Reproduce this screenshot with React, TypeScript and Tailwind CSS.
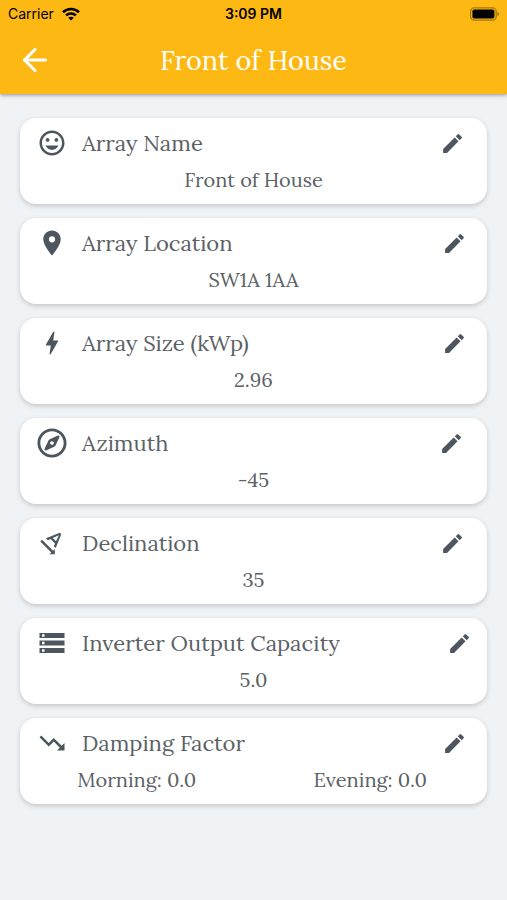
import type { ReactNode } from "react";
import type { IconType } from "react-icons";
import { ArrowLeft } from "lucide-react";
import { FaRegCompass } from "react-icons/fa";
import {
  MdBolt,
  MdEdit,
  MdLocationOn,
  MdStorage,
  MdTagFaces,
  MdTextRotationAngledown,
  MdTrendingDown,
} from "react-icons/md";

type CardProps = {
  icon: IconType;
  title: string;
  children: ReactNode;
};

const StatusBar = () => {
  return (
    <div className="grid h-7 grid-cols-3 items-center px-2 font-['Inter',sans-serif] text-sm text-black">
      <div className="flex items-center gap-2">
        <span>Carrier</span>
        <svg viewBox="0 0 18 14" className="h-[14px] w-[18px]" fill="none" stroke="currentColor" strokeWidth="2.6">
          <path d="M1 5.2C5.4 0.9 12.6 0.9 17 5.2" />
          <path d="M4.1 8.4C6.8 5.8 11.2 5.8 13.9 8.4" />
          <path d="M9 13.6 6.2 10.8C7.8 9.4 10.2 9.4 11.8 10.8Z" fill="currentColor" stroke="none" />
        </svg>
      </div>
      <span className="text-center font-semibold">3:09 PM</span>
      <svg viewBox="0 0 30 14" className="h-[14px] w-[30px] justify-self-end">
        <rect x="1.6" y="0.8" width="25.6" height="12.4" rx="3.6" fill="none" stroke="#000" strokeOpacity="0.35" strokeWidth="1.3" />
        <rect x="3.4" y="2.5" width="22" height="9" rx="1.8" fill="#000" />
        <path d="M28.4 4.8C30.4 5.6 30.4 8.4 28.4 9.2Z" fill="#000" fillOpacity="0.4" />
      </svg>
    </div>
  );
};

const Header = () => {
  return (
    <header className="relative z-10 bg-[#fdb813] shadow-[0_1px_4px_rgba(0,0,0,0.4)]">
      <StatusBar />
      <div className="grid h-[66px] grid-cols-[36px_1fr_36px] items-center px-[17px] pb-[2px] text-white">
        <button type="button" aria-label="Back">
          <ArrowLeft size={36} strokeWidth={2.1} />
        </button>
        <h1 className="text-center text-[27px] leading-9">Front of House</h1>
      </div>
    </header>
  );
};

const Card = ({ icon: Icon, title, children }: CardProps) => {
  return (
    <section className="rounded-2xl bg-white pt-[10px] pb-3 shadow-[0_2px_5px_rgba(0,0,0,0.18)]">
      <div className="flex items-center pr-[10px] pl-[17px]">
        <Icon size={30} className="mr-[15px] shrink-0 text-[#4d565e]" />
        <h2 className="text-[22px] leading-[30px]">{title}</h2>
        <div className="flex-[20]" />
        <button type="button" aria-label={`Edit ${title}`} className="shrink-0 text-[#4d565e]">
          <MdEdit size={25} />
        </button>
        <div className="flex-[1]" />
      </div>
      <div className="mt-[10px] text-center text-xl leading-6">{children}</div>
    </section>
  );
};

const App = () => {
  return (
    <div className="min-h-screen bg-[#eff3f6] font-['Lora','Liberation_Serif',serif] text-[#5b6165]">
      <Header />
      <main className="flex flex-col gap-[14px] px-5 py-6">
        <Card icon={MdTagFaces} title="Array Name">
          <p>Front of House</p>
        </Card>
        <Card icon={MdLocationOn} title="Array Location">
          <p>SW1A 1AA</p>
        </Card>
        <Card icon={MdBolt} title="Array Size (kWp)">
          <p>2.96</p>
        </Card>
        <Card icon={FaRegCompass} title="Azimuth">
          <p>-45</p>
        </Card>
        <Card icon={MdTextRotationAngledown} title="Declination">
          <p>35</p>
        </Card>
        <Card icon={MdStorage} title="Inverter Output Capacity">
          <p>5.0</p>
        </Card>
        <Card icon={MdTrendingDown} title="Damping Factor">
          <div className="grid grid-cols-2">
            <p>Morning: 0.0</p>
            <p>Evening: 0.0</p>
          </div>
        </Card>
      </main>
    </div>
  );
};

export default App;
